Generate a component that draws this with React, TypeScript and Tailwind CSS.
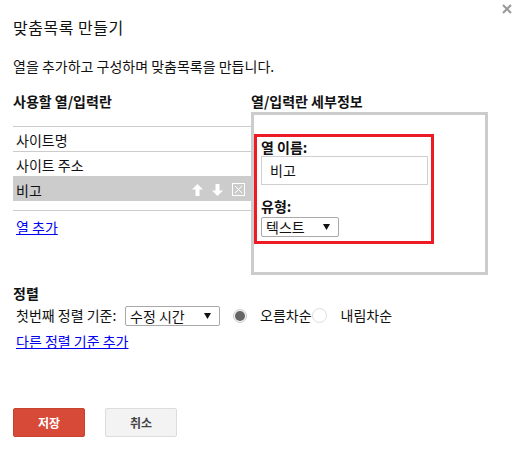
import type { ReactNode } from 'react';

const font = "font-['Noto_Sans_CJK_KR','Noto_Sans',sans-serif]";

function ArrowIcon({ down = false }: { down?: boolean }) {
  return (
    <svg width="11" height="12" viewBox="0 0 11 12" className={down ? 'rotate-180' : ''} aria-hidden>
      <path d="M5.5 0 L11 5.5 L7.5 5.5 L7.5 12 L3.5 12 L3.5 5.5 L0 5.5 Z" fill="#fff" />
    </svg>
  );
}

function RemoveIcon() {
  return (
    <svg width="13" height="13" viewBox="0 0 13 13" aria-hidden>
      <rect x="0.5" y="0.5" width="12" height="12" fill="none" stroke="#fff" strokeWidth="1" />
      <path d="M3 3 L10 10 M10 3 L3 10" stroke="#fff" strokeWidth="1" />
    </svg>
  );
}

function SelectBox({ label, className }: { label: string; className: string }) {
  return (
    <div
      className={`flex items-center justify-between rounded-[2px] border border-[#a9a9a9] bg-white pl-[4px] pr-[8px] leading-[16px] ${className}`}
    >
      <span>{label}</span>
      <svg width="7" height="6" viewBox="0 0 7 6" aria-hidden>
        <path d="M0 0 L7 0 L3.5 6 Z" fill="#111" />
      </svg>
    </div>
  );
}

function Row({ children, selected = false }: { children: ReactNode; selected?: boolean }) {
  return (
    <div
      className={`flex items-center pl-[3px] pt-[2px] leading-[16px] ${selected ? 'h-[25px] bg-[#cccccc]' : 'h-[24px]'}`}
    >
      {children}
    </div>
  );
}

export default function App() {
  return (
    <div className={`relative h-[450px] w-[516px] bg-white px-[13px] text-[14px] text-[#111] ${font}`}>
      <button className="absolute right-[4px] top-[4px]" aria-label="close">
        <svg width="10" height="10" viewBox="0 0 10 10" aria-hidden>
          <path d="M1 1 L9 9 M9 1 L1 9" stroke="#999" strokeWidth="2" />
        </svg>
      </button>

      <h1 className="pt-[17px] text-[16px] leading-[20px] tracking-[0.5px]">맞춤목록 만들기</h1>
      <p className="mt-[21px] leading-[16px]">열을 추가하고 구성하며 맞춤목록을 만듭니다.</p>

      <div className="mt-[19px] flex">
        <div className="w-[238px]">
          <h2 className="h-[16px] font-bold leading-[16px]">사용할 열/입력란</h2>
          <div className="mt-[17px] border-t border-[#cccccc]">
            <Row>사이트명</Row>
            <div className="border-t border-[#cccccc]" />
            <Row>사이트 주소</Row>
            <Row selected>
              <span className="flex-1">비고</span>
              <div className="flex items-center gap-[9px] pr-[6px]">
                <ArrowIcon />
                <ArrowIcon down />
                <RemoveIcon />
              </div>
            </Row>
            <div className="h-[10px] border-b border-[#cccccc]" />
          </div>
          <a href="#" className="mt-[8px] ml-[3px] inline-block leading-[16px] text-[#0000ee] underline">
            열 추가
          </a>
        </div>

        <div>
          <h2 className="h-[16px] font-bold leading-[16px]">열/입력란 세부정보</h2>
          <div className="mt-[3px] h-[163px] w-[237px] border-[3px] border-[#cccccc]">
            <div className="mt-[19px] h-[110px] w-[180px] border-[3px] border-[#ed1c24] pl-[4px] pt-[2px]">
              <div className="font-bold leading-[16px]">열 이름:</div>
              <div className="mt-[1px] flex h-[29px] w-[167px] items-center border border-[#cfcfcf] pl-[8px]">
                비고
              </div>
              <div className="mt-[13px] font-bold leading-[16px]">유형:</div>
              <SelectBox label="텍스트" className="mt-[3px] h-[20px] w-[78px]" />
            </div>
          </div>
        </div>
      </div>

      <div className="mt-[10px]">
        <h2 className="font-bold leading-[16px]">정렬</h2>
        <div className="mt-[4px] flex items-center pl-[3px]">
          <span className="w-[109px]">첫번째 정렬 기준:</span>
          <SelectBox label="수정 시간" className="h-[20px] w-[95px]" />
          <span className="ml-[13px] flex h-[14px] w-[14px] items-center justify-center rounded-full border border-[#d0d0d0] bg-[#f4f4f4]">
            <span className="h-[10px] w-[10px] rounded-full bg-[#666666]" />
          </span>
          <span className="ml-[13px]">오름차순</span>
          <span className="h-[15px] w-[15px] rounded-full border border-[#dddddd] bg-white" />
          <span className="ml-[14px]">내림차순</span>
        </div>
        <a href="#" className="mt-[7px] ml-[3px] inline-block leading-[16px] text-[#0000ee] underline">
          다른 정렬 기준 추가
        </a>
      </div>

      <div className="absolute bottom-[13px] left-[13px] flex gap-[20px]">
        <button className="h-[29px] w-[72px] rounded-[2px] border border-[#c6432f] bg-[#d84a38] text-[12px] font-bold text-white">
          저장
        </button>
        <button className="h-[29px] w-[72px] rounded-[2px] border border-[#dcdcdc] bg-[#f3f3f3] text-[12px] font-bold text-[#444]">
          취소
        </button>
      </div>
    </div>
  );
}
